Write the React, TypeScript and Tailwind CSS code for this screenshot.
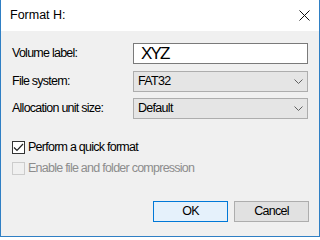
import React from "react";

const font = { fontFamily: '"Liberation Sans", Arial, sans-serif' };

function Chevron() {
  return (
    <svg width="9" height="5" viewBox="0 0 9 5" className="shrink-0">
      <path d="M0.5 0.5 L4.5 4.5 L8.5 0.5" fill="none" stroke="#606060" strokeWidth="1" />
    </svg>
  );
}

function Select({ value }: { value: string }) {
  return (
    <div className="flex h-[21px] w-[175px] items-center justify-between border border-[#adadad] bg-[#e5e5e5] pl-[4px] pr-[4px] text-[12.5px] tracking-[-0.7px] text-black">
      <span>{value}</span>
      <Chevron />
    </div>
  );
}

export default function App() {
  return (
    <div
      className="flex h-[237px] w-[320px] flex-col border-x border-b border-[#2f7fc4] bg-[#f0f0f0] text-black"
      style={font}
    >
      <div className="flex h-[31px] shrink-0 items-center justify-between bg-white pl-[9px] pr-[9px]">
        <span className="text-[12.5px]">Format H:</span>
        <svg width="11" height="11" viewBox="0 0 11 11">
          <path d="M0.5 0.5 L10.5 10.5 M10.5 0.5 L0.5 10.5" stroke="#111" strokeWidth="1" />
        </svg>
      </div>

      <div className="flex flex-1 flex-col pl-[11px] pr-[10px] pt-[12px] text-[12.5px] tracking-[-0.75px]">
        <div className="flex h-[21px] items-center">
          <span className="w-[121px]">Volume label:</span>
          <div className="flex h-[21px] w-[175px] items-center border border-[#7a7a7a] bg-white pl-[7px] text-[17px] leading-none tracking-[-1.8px]">
            XYZ
          </div>
        </div>
        <div className="mt-[7px] flex items-center">
          <span className="w-[121px]">File system:</span>
          <Select value="FAT32" />
        </div>
        <div className="mt-[6px] flex items-center">
          <span className="w-[121px]">Allocation unit size:</span>
          <Select value="Default" />
        </div>

        <div className="mt-[22px] flex h-[13px] items-center gap-[3px]">
          <div className="flex h-[13px] w-[13px] items-center justify-center border border-[#333] bg-white">
            <svg width="11" height="9" viewBox="0 0 11 9">
              <path d="M1 4.5 L4 7.5 L10 1" fill="none" stroke="#222" strokeWidth="1.2" />
            </svg>
          </div>
          <span>Perform a quick format</span>
        </div>
        <div className="mt-[8px] flex h-[13px] items-center gap-[3px]">
          <div className="h-[13px] w-[13px] border border-[#cccccc] bg-[#f0f0f0]" />
          <span className="text-[#8d8d8d]">Enable file and folder compression</span>
        </div>

        <div className="mt-[26px] flex justify-end gap-[6px]">
          <div className="flex h-[21px] w-[75px] items-center justify-center border border-[#0078d7] bg-[#e5f1fb]">
            OK
          </div>
          <div className="flex h-[21px] w-[75px] items-center justify-center border border-[#adadad] bg-[#e1e1e1]">
            Cancel
          </div>
        </div>
      </div>
    </div>
  );
}
